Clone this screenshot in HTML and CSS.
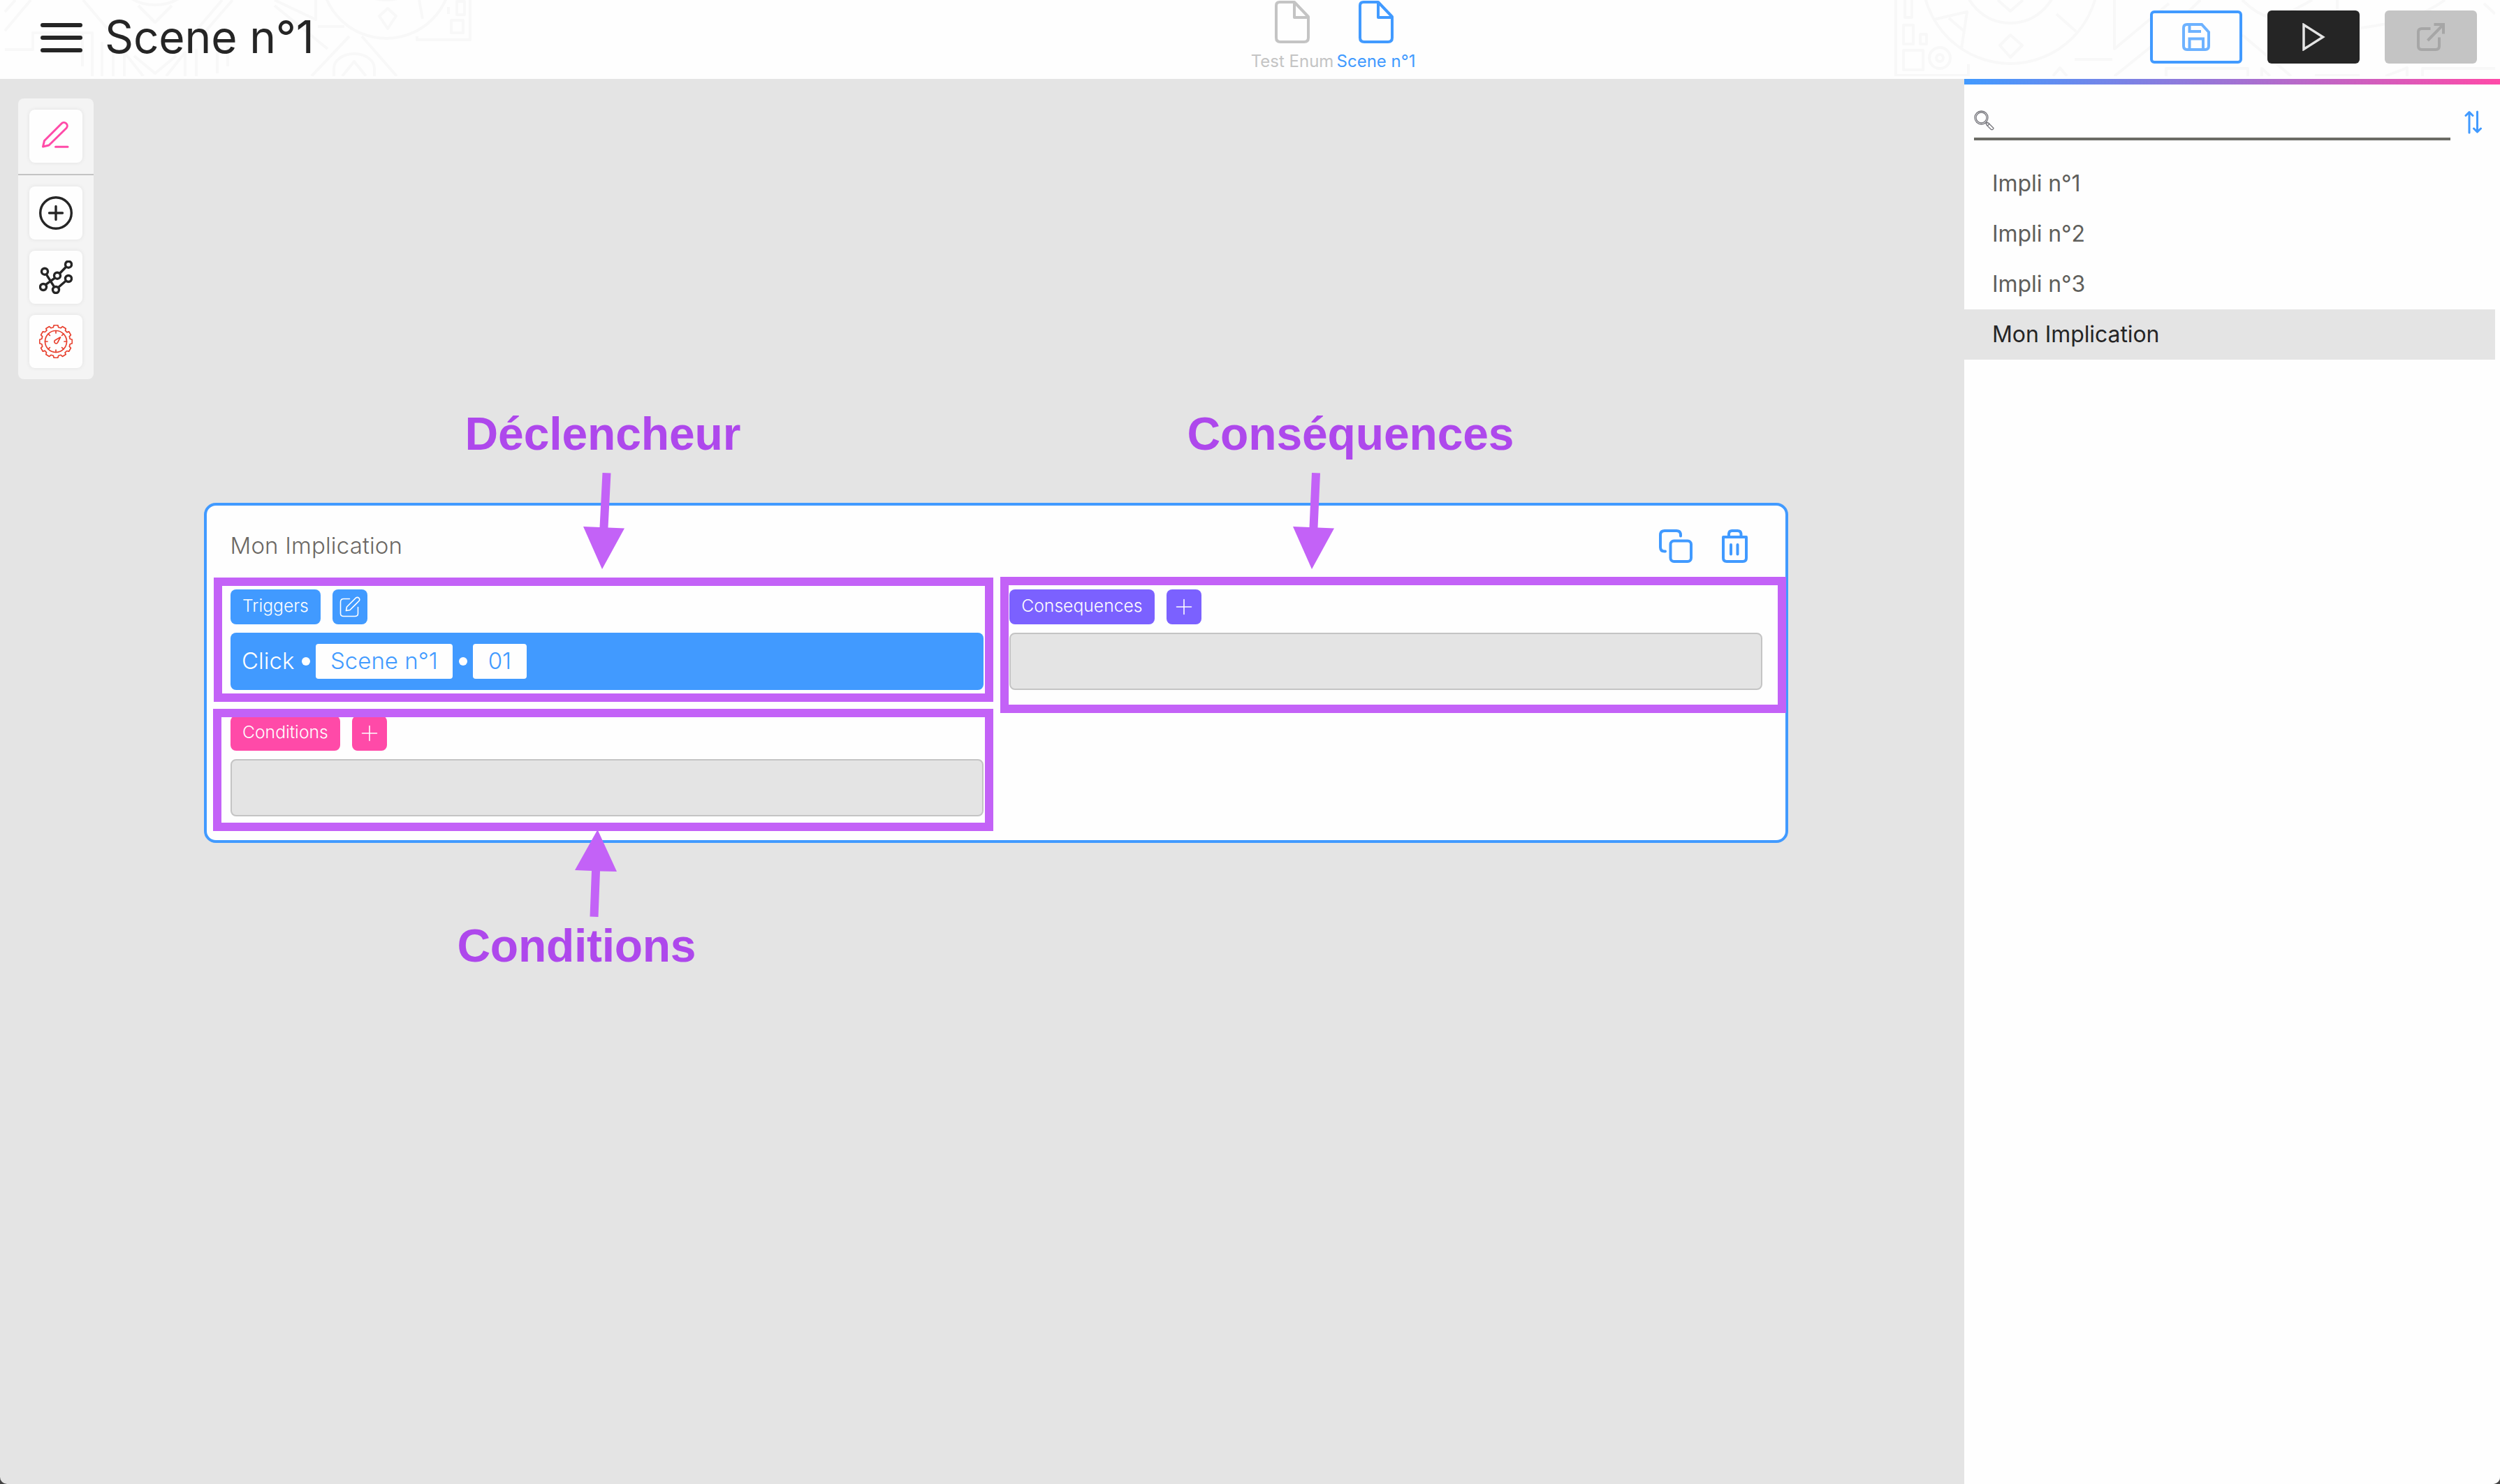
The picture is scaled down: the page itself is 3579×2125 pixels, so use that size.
FILE: index.html
```html
<!DOCTYPE html>
<html lang="fr">
<head>
<meta charset="utf-8">
<title>Scene n°1</title>
<link rel="stylesheet" href="styles.css">
</head>
<body>
<div class="app">
  <header class="topbar">
    <svg class="pattern pattern-left" width="690" height="109" viewBox="0 0 690 109">
      <path d="M7 17L22 0M7 44L44 0M7 71H47V47H132V109M119 0L163 52M118 47V95M146 60V109M162 70V109M178 70V109M178 75L205 109M192 80L222 105L252 80M238 109L265 75V109M281 70V109M311 60V105M326 65V95M272 54L318 0M288 52L333 0M198 8L222 32L246 8M393 0L452 28V0M393 8L469 70M455 38H493M446 109L500 52M518 52L568 109"/>
      <circle cx="222" cy="-60" r="67"/><circle cx="553" cy="-38" r="93"/>
      <path d="M520 -8Q553 8 586 -8M600 0L605 27M478 109V98A29 21 0 0 1 536 98V109M490 109L507 88L524 109M543 23L555 12L567 23L555 41ZM597 52V57H673V0M646 29H663V47H646ZM654 2H665V21H654ZM642 10V20"/>
    </svg>
    <svg class="pattern pattern-right" width="862" height="109" viewBox="0 0 862 109">
      <path d="M4 0V108H108V92M17 0V25H27V0M15 36H29V63H15ZM39 49H48V63H39ZM15 72H43V100H15ZM58 28L106 17L98 70M80 26L101 44M150 0L168 16L186 0M168 50L185 65L168 82L153 65ZM234 20L262 45M260 85H314M229 109L239 97L249 109M317 0V70L395 5M317 109L378 60L440 0M500 0Q520 20 540 25M500 50L570 109M391 109V98H508V109M528 109V98L540 109M604 108H668M705 109L736 97V109M758 109V98H862M636 0V20M600 0L545 30M670 40Q750 30 790 0M846 5L862 20"/>
      <circle cx="168" cy="-35" r="126"/><circle cx="168" cy="-35" r="68"/><circle cx="67" cy="83" r="15"/><circle cx="67" cy="83" r="5"/>
    </svg>
    <div class="heading">
      <div class="burger"><i></i><i></i><i></i></div>
      <h1>Scene n°1</h1>
    </div>
    <nav class="tabs">
      <div class="tab">
        <svg width="50" height="61" viewBox="0 0 50 61"><path d="M7 2H28L48 23V53Q48 59 42 59H8Q2 59 2 53V7Q2 2 7 2ZM28 2V24H48"/></svg>
        <span>Test Enum</span>
      </div>
      <div class="tab tab-active">
        <svg width="50" height="61" viewBox="0 0 50 61"><path d="M7 2H28L48 23V53Q48 59 42 59H8Q2 59 2 53V7Q2 2 7 2ZM28 2V24H48"/></svg>
        <span>Scene n°1</span>
      </div>
    </nav>
    <div class="actions">
      <div class="btn btn-save"><svg width="40" height="40" viewBox="0 0 40 40"><path d="M7 2H28L38 13V33Q38 38 33 38H7Q2 38 2 33V7Q2 2 7 2ZM10.500 2V12H27M10.500 38V22.500H30V38"/></svg></div>
      <div class="btn btn-play"><svg width="40" height="40" viewBox="0 0 40 40"><path d="M6 2.500L33.500 20L6 37.500Z"/></svg></div>
      <div class="btn btn-export"><svg width="40" height="40" viewBox="0 0 40 40"><path d="M19.500 8H7Q2 8 2 13V33Q2 38 7 38H27Q32 38 32 33V20.500M15.500 25L37 3M24.500 2H38V15.500"/></svg></div>
    </div>
  </header>
  <main class="workspace">
    <section class="canvas">
      <aside class="toolbar">
        <div class="tool-group">
          <div class="tool"><svg class="ico-pink" width="48" height="48" viewBox="0 0 48 48"><path d="M5.500 39L7.500 30.500L32 6A4.500 4.500 0 0 1 39 12.500L14 37ZM23.500 39.300H41"/></svg></div>
        </div>
        <div class="tool-group">
          <div class="tool"><svg class="ico-dark" width="48" height="48" viewBox="0 0 48 48"><circle cx="24" cy="24" r="22.300"/><path d="M24 14.500V33.500M14.500 24H33.500"/></svg></div>
          <div class="tool"><svg class="ico-dark" width="48" height="48" viewBox="0 0 48 48"><path d="M9.300 34.600L22.500 25.200M29.500 18.500L38.500 9.200M10.300 19.800L21.700 37.800M27.500 38.500L38.500 29"/><g><circle cx="6" cy="38" r="4.500"/><circle cx="8" cy="15.700" r="4.500"/><circle cx="26" cy="21.700" r="4.500"/><circle cx="42" cy="5.700" r="4.500"/><circle cx="42" cy="26" r="4.500"/><circle cx="24" cy="42" r="4.500"/></g></svg></div>
          <div class="tool"><svg class="ico-red" width="48" height="48" viewBox="0 0 48 48"><path d="M21.200 0.700 L26.800 0.700 L27.700 3.800 L31.100 4.700 L33.400 2.600 L38.200 5.400 L37.500 8.400 L39.900 10.900 L42.600 9.800 L45.400 14.600 L43.300 16.900 L44.200 20.300 L47.300 21.200 L47.300 26.800 L44.200 27.700 L43.300 31.100 L45.400 33.400 L42.600 38.200 L39.600 37.500 L37.100 39.900 L38.200 42.600 L33.400 45.400 L31.100 43.300 L27.700 44.200 L26.800 47.300 L21.200 47.300 L20.300 44.200 L16.900 43.300 L14.600 45.400 L9.800 42.600 L10.500 39.600 L8.100 37.100 L5.400 38.200 L2.600 33.400 L4.700 31.100 L3.800 27.700 L0.700 26.800 L0.700 21.200 L3.800 20.300 L4.700 16.900 L2.600 14.600 L5.400 9.800 L8.400 10.500 L10.900 8.100 L9.800 5.400 L14.600 2.600 L16.900 4.700 L20.300 3.800Z"/><circle cx="24" cy="24" r="15.500"/><path d="M24 8.500V12M24 36V39.500M8.500 24H12M36 24H39.500M13 13L15.400 15.400M32.600 32.600L35 35M13 35L15.400 32.600M32.600 15.400L35 13M30.500 17.800L27 24.500A2.600 2.600 0 1 1 22.800 22.200Z"/></svg></div>
        </div>
      </aside>
      <article class="card">
        <div class="card-head">
          <h2>Mon Implication</h2>
          <div class="card-icons">
            <svg width="48" height="48" viewBox="0 0 48 48"><path d="M9 31.500H8Q2 31.500 2 25.500V8Q2 2 8 2H25Q31 2 31 8V9.500"/><rect x="16.500" y="16.500" width="29.500" height="29.500" rx="5"/></svg>
            <svg width="38" height="48" viewBox="0 0 38 48"><path d="M2 11H35V41Q35 46 30 46H7Q2 46 2 41ZM10 11V7Q10 2 14.500 2H22.500Q27.500 2 27.500 7V11M13 22V35.500M22.500 22V35.500"/></svg>
          </div>
        </div>
        <div class="columns">
          <div class="col">
            <div class="block">
              <div class="labels blue"><span class="badge">Triggers</span><span class="mini"><svg width="30" height="30" viewBox="0 0 30 30"><path d="M14.500 3.500H6Q1.500 3.500 1.500 8V24.500Q1.500 28.500 6 28.500H22Q26.500 28.500 26.500 24.500V15.500M9.500 20.500L10.500 15L23.500 2Q26 0.500 28 2.500Q29.500 4.500 28 6.500L15 19.500Z"/></svg></span></div>
              <div class="event">
                <span class="event-name">Click</span><i class="dot"></i><span class="chip">Scene n°1</span><i class="dot dot-2"></i><span class="chip">01</span>
              </div>
            </div>
            <div class="block">
              <div class="labels pink"><span class="badge">Conditions</span><span class="mini"><svg width="30" height="30" viewBox="0 0 30 30"><path d="M15 4.500V25.500M4.500 15H25.500"/></svg></span></div>
              <div class="slot"></div>
            </div>
          </div>
          <div class="col">
            <div class="block">
              <div class="labels violet"><span class="badge">Consequences</span><span class="mini"><svg width="30" height="30" viewBox="0 0 30 30"><path d="M15 4.500V25.500M4.500 15H25.500"/></svg></span></div>
              <div class="slot"></div>
            </div>
          </div>
        </div>
      </article>
    </section>
    <aside class="sidebar">
      <div class="search-row">
        <div class="search"><svg width="30" height="30" viewBox="0 0 30 30"><circle cx="10.500" cy="10.500" r="9.500"/><circle cx="10.500" cy="10.500" r="7.500"/><path d="M16.500 18L18 19.500M18 16.500L19.500 18M18.500 17.500Q16.500 18.500 18 21L24.500 27.500Q27 28.500 28 25.500L21 18.500Q19.500 17 18.500 17.500ZM22 19L19.500 22"/></svg></div>
        <svg class="sort" width="26" height="34" viewBox="0 0 26 34"><path d="M7 32V3M2 7.500L7 2.500L12 7.500M18.500 2V30.500M13.500 26L18.500 31L23.500 26"/></svg>
      </div>
      <ul class="list">
        <li>Impli n°1</li>
        <li>Impli n°2</li>
        <li>Impli n°3</li>
        <li class="selected">Mon Implication</li>
      </ul>
    </aside>
  </main>
  <svg class="annotations" width="3579" height="2125" viewBox="0 0 3579 2125">
    <g class="frames">
      <rect x="312" y="833" width="1104" height="166"/>
      <rect x="311" y="1021" width="1105" height="163"/>
      <rect x="1438" y="832" width="1113" height="183"/>
    </g>
    <g class="arrows">
      <path d="M862.500 677L874.500 677.500L870.500 755.500L894 756.500L862 815L835 754L858.500 755Z"/>
      <path d="M1878 677L1890 677.500L1886.500 755.500L1910 756.500L1878 815L1851 754L1874.500 755Z"/>
      <path d="M855.500 1188L883 1248L859 1247.500L856.500 1313L844.500 1312.500L847 1247L823 1246Z"/>
    </g>
    <g class="captions">
      <text x="665.500" y="643.500" textLength="395">Déclencheur</text>
      <text x="1699.500" y="643.500" textLength="468">Conséquences</text>
      <text x="654.500" y="1376.500" textLength="342">Conditions</text>
    </g>
  </svg>
</div>
</body>
</html>
```
FILE: styles.css
```css
* { box-sizing: border-box; }
body { margin: 0; background: #444; font-family: Inter, "Liberation Sans", sans-serif; color: #252525; }
h1, h2, ul { margin: 0; padding: 0; font-weight: 400; list-style: none; }
svg { display: block; fill: none; stroke-linecap: round; stroke-linejoin: round; }

.app { position: relative; display: flex; flex-direction: column; width: 3579px; height: 2125px; overflow: hidden; background: #e4e4e4; border-radius: 0 0 10px 10px; }

.topbar { position: relative; display: grid; grid-template-columns: 1791px auto 1fr; height: 113px; background: #fefefe; }
.pattern { position: absolute; top: 0; stroke: #f8f8f8; stroke-width: 4; stroke-linecap: butt; }
.pattern-left { left: 0; }
.pattern-right { left: 2710px; }
.heading { position: relative; display: flex; gap: 32px; padding-left: 58px; }
.burger { display: flex; flex-direction: column; gap: 12px; padding-top: 33px; }
.burger i { width: 60px; height: 6px; border-radius: 3px; background: #252525; }
h1 { font-size: 64px; letter-spacing: -.15px; line-height: 106px; white-space: nowrap; }
.tabs { display: flex; gap: 5px; padding-top: 1px; color: #c4c4c4; font-size: 24px; }
.tab { display: flex; flex-direction: column; align-items: center; width: 118px; white-space: nowrap; }
.tab svg { stroke: currentColor; stroke-width: 4; }
.tab span { margin-top: 11px; line-height: 29px; }
.tab-active { width: 112px; color: #419aff; }
.actions { position: relative; display: flex; justify-content: flex-end; gap: 36px; padding: 15px 33px 0 0; }
.btn { display: flex; align-items: center; justify-content: center; width: 132px; height: 76px; border-radius: 6px; }
.btn svg { stroke-width: 4; stroke-linejoin: miter; stroke-linecap: butt; }
.btn-save { border: 4px solid #419aff; background: #fefefe; }
.btn-save svg { stroke: #6db2ff; }
.btn-play { background: #252525; }
.btn-play svg { stroke: #e4e4e4; stroke-width: 3.500; }
.btn-export { background: #c4c4c4; }
.btn-export svg { stroke: #a6a6a6; }

.workspace { display: flex; flex: 1; }
.canvas { display: flex; align-items: flex-start; width: 2812px; padding: 28px 0 0 26px; }
.toolbar { width: 108px; border-radius: 8px; background: #f4f4f4; }
.tool-group { display: flex; flex-direction: column; align-items: center; gap: 16px; padding: 16px 0; }
.tool-group + .tool-group { border-top: 2px solid #c4c4c4; }
.tool { display: flex; align-items: center; justify-content: center; width: 76px; height: 76px; border-radius: 8px; background: #fefefe; box-shadow: 0 0 6px rgba(0, 0, 0, .08); }
.ico-pink { stroke: #ff4aa8; stroke-width: 3; }
.ico-dark { stroke: #252525; stroke-width: 3.400; }
.ico-dark g { fill: #fefefe; }
.ico-red { stroke: #e8412f; stroke-width: 1.700; }

.card { width: 2268px; height: 487px; margin: 579px 0 0 158px; padding: 0 33px 0 33.500px; border: 4px solid #419aff; border-radius: 17px; background: #fefefe; }
.card-head { display: flex; justify-content: space-between; height: 120px; padding: 34px 20px 0 0; }
h2 { color: #6b6864; font-size: 33px; font-weight: 300; line-height: 46px; letter-spacing: .17px; }
.card-icons { display: flex; gap: 42px; }
.card-icons svg { stroke: #419aff; stroke-width: 4; }
.columns { display: flex; gap: 37px; }
.col { display: flex; flex-direction: column; gap: 37px; width: 1078.500px; }
.labels { display: flex; gap: 16.500px; height: 50px; color: #fefefe; font-size: 24.700px; font-weight: 300; line-height: 47px; }
.badge { padding: 0 17.500px; border-radius: 8px; }
.mini { display: flex; align-items: center; justify-content: center; width: 50px; border-radius: 8px; }
.mini svg { stroke: #fefefe; stroke-width: 1.600; }
.blue .badge, .blue .mini { background: #419aff; }
.pink .badge, .pink .mini { background: #ff4aa8; }
.violet .badge, .violet .mini { background: #7b61ff; }
.event { display: flex; align-items: center; height: 82px; margin-top: 12px; padding-left: 16.500px; border-radius: 8px; background: #419aff; color: #fefefe; font-size: 33px; font-weight: 300; }
.event-name { width: 77.500px; padding-bottom: 2px; }
.dot { width: 12px; height: 12px; margin: 0 8px; border-radius: 50%; background: #fefefe; }
.chip { height: 50px; padding: 0 21.500px; border-radius: 4px; background: #fefefe; color: #419aff; line-height: 48px; white-space: nowrap; }
.dot-2 { margin-left: 9px; }
.slot { height: 82px; margin-top: 12px; border: 2px solid #c4c4c4; border-radius: 8px; background: #e4e4e4; }

.sidebar { flex: 1; border-top: 8px solid; border-image: linear-gradient(90deg, #419aff, #ff4aa8) 1; border-right: 0; border-bottom: 0; border-left: 0; background: #fefefe; }
.search-row { display: flex; gap: 20px; height: 106px; padding: 37px 0 0 14px; }
.search { width: 682px; height: 43px; border-bottom: 4px solid #6b6b65; }
.search svg { stroke: #77777d; stroke-width: 1.300; }
.sort { stroke: #419aff; stroke-width: 3; }
.list li { width: 760px; height: 72px; padding-left: 40px; color: #5f5f5b; font-size: 32px; letter-spacing: -.08px; line-height: 72px; }
.list .selected { background: #e4e4e4; color: #252525; }

.annotations { position: absolute; top: 0; left: 0; }
.frames { stroke: #c362f7; stroke-width: 12; stroke-linejoin: miter; }
.arrows { fill: #c362f7; }
.captions { fill: #ae48ec; font: 700 66px "Liberation Sans", Arial, sans-serif; }
```
